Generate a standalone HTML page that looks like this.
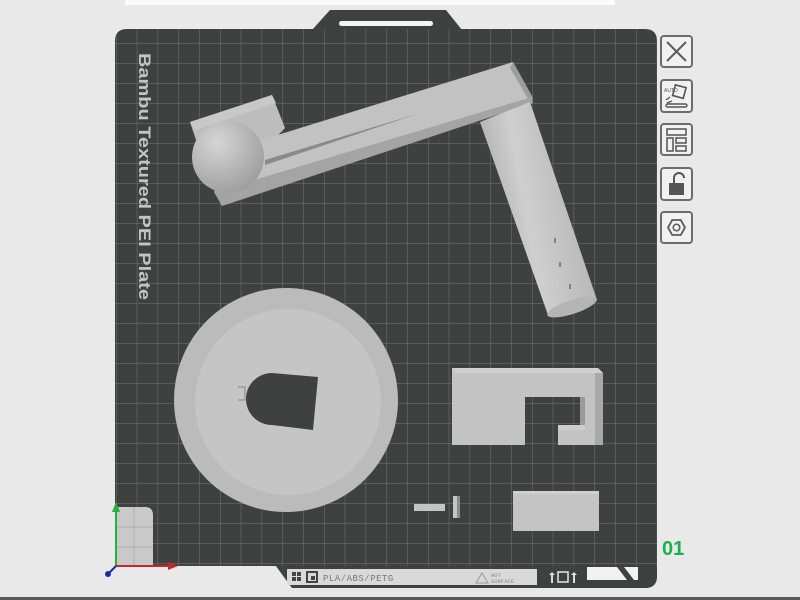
<!DOCTYPE html>
<html><head><meta charset="utf-8"><style>
html,body{margin:0;padding:0;background:#e9e9e9;width:800px;height:600px;overflow:hidden}
svg{display:block}
</style></head><body>
<svg width="800" height="600" viewBox="0 0 800 600" xmlns="http://www.w3.org/2000/svg">
<defs>
<pattern id="grid" x="116" y="3.3" width="20.8" height="20" patternUnits="userSpaceOnUse">
<rect width="20.8" height="20" fill="#3f4141"/>
<path d="M0 0V20M0 0H20.8" stroke="#747676" stroke-width="1"/>
</pattern>
<radialGradient id="sph" cx="0.35" cy="0.3" r="0.8"><stop offset="0" stop-color="#d6d6d6"/><stop offset="1" stop-color="#9a9a9a"/></radialGradient>
<linearGradient id="cyl" x1="0" y1="0" x2="1" y2="0" gradientTransform="rotate(-18 .5 .5)"><stop offset="0" stop-color="#a8a8a8"/><stop offset=".4" stop-color="#cfcfcf"/><stop offset="1" stop-color="#b0b0b0"/></linearGradient>
<clipPath id="pc"><path d="M127 29H645Q657 29 657 41V576Q657 588 645 588H292L276 566H115V41Q115 29 127 29Z"/></clipPath>
</defs>
<rect width="800" height="600" fill="#e9e9e9"/>
<rect x="125" y="0" width="490" height="5" fill="#fbfbfb"/>
<rect x="0" y="597" width="800" height="3" fill="#5a5a5a"/>
<path d="M312 30L330 10H446L462 30Z" fill="#3f4141"/>
<rect x="339" y="21" width="94" height="5" rx="2.5" fill="#f4f4f4"/>
<path d="M127 29H645Q657 29 657 41V576Q657 588 645 588H292L276 566H115V41Q115 29 127 29Z" fill="url(#grid)"/>
<g clip-path="url(#pc)">
<path d="M115 507H145Q153 507 153 515V566H115Z" fill="#c9c9c9"/>
<path d="M134 507V566M115 527H153M115 547H153" stroke="#b0b0b0" stroke-width="1"/>
<rect x="270" y="566" width="390" height="25" fill="#3f4141"/>
</g>
<rect x="287" y="569" width="250" height="16" fill="#d9d9d9"/>
<rect x="292" y="572" width="4" height="4" fill="#444"/><rect x="297" y="572" width="4" height="4" fill="#444"/><rect x="292" y="577" width="4" height="4" fill="#444"/><rect x="297" y="577" width="4" height="4" fill="#444"/>
<rect x="307" y="572" width="10" height="10" fill="none" stroke="#444" stroke-width="2"/><rect x="311" y="576" width="4" height="4" fill="#444"/>
<text x="323" y="581" font-family="Liberation Mono,monospace" font-size="9" fill="#777" letter-spacing="0.5">PLA/ABS/PETG</text>
<path d="M476 583L482 573L488 583Z" fill="none" stroke="#999" stroke-width="1"/>
<text x="491" y="577" font-family="Liberation Mono,monospace" font-size="5.5" fill="#888">HOT</text>
<text x="491" y="583" font-family="Liberation Mono,monospace" font-size="5.5" fill="#888">SURFACE</text>
<path d="M549 575l3-3 3 3h-2v8h-2v-8z" fill="#ddd"/>
<rect x="558" y="572" width="10" height="10" fill="none" stroke="#ddd" stroke-width="1.6"/>
<path d="M571 575l3-3 3 3h-2v8h-2v-8z" fill="#ddd"/>
<path d="M587 567H617L627 580H587Z" fill="#f2f2f2"/>
<path d="M624 567H638V580H634Z" fill="#f2f2f2"/>
<text transform="translate(139,53) rotate(90)" font-family="Liberation Sans,sans-serif" font-weight="bold" font-size="17" fill="#c4c4c4" textLength="247" lengthAdjust="spacingAndGlyphs">Bambu Textured PEI Plate</text>
<path d="M190 122L272 95L285 128L262 152L200 152Z" fill="#bdbdbd"/>
<path d="M190 122L272 95L276 103L195 130Z" fill="#c8c8c8"/>
<path d="M255 142L513 62L533 98L222 205L214 192Z" fill="#c2c2c2"/>
<path d="M513 62L533 98L531 104L510 68Z" fill="#9d9d9d"/>
<path d="M214 192L532 97L533 103L222 206Z" fill="#a4a4a4"/>
<path d="M265 160L420 113L265 165Z" fill="#8a8a8a"/>
<path d="M480 122L530 102L597 300L548 315Z" fill="url(#cyl)"/>
<ellipse cx="572" cy="307" rx="26" ry="7" transform="rotate(-18 572 307)" fill="#b5b5b5"/>
<path d="M555 238v5M560 262v5M570 284v5" stroke="#555" stroke-width="1.2"/>
<circle cx="228" cy="157" r="36" fill="url(#sph)"/>
<circle cx="286" cy="400" r="112" fill="#bbbbbb"/>
<circle cx="288" cy="402" r="93" fill="#c5c5c5"/>
<path d="M272 373L318 377L313 430L272 425A26 26 0 0 1 272 373Z" fill="#3f4141"/>
<path d="M238 387h7v13h-7" fill="none" stroke="#888" stroke-width="1"/>
<path d="M452 368H598L603 373V445H558V425H585V397H525V445H452Z" fill="#c3c3c3"/>
<path d="M595 371L603 373V445H595Z" fill="#a8a8a8"/>
<path d="M580 397H585V425H580Z" fill="#9a9a9a"/>
<path d="M558 425H585V430H558Z" fill="#cdcdcd"/>
<path d="M452 368H598L603 373H456Z" fill="#cfcfcf"/>
<rect x="513" y="491" width="86" height="40" fill="#c4c4c4"/>
<rect x="513" y="491" width="86" height="3" fill="#d0d0d0"/>
<rect x="414" y="504" width="31" height="7" fill="#c4c4c4"/>
<rect x="453" y="496" width="7" height="22" fill="#c4c4c4"/>
<rect x="457" y="496" width="3" height="22" fill="#8c8c8c"/>
<line x1="116" y1="566" x2="116" y2="510" stroke="#27b03b" stroke-width="2"/>
<path d="M112 512L116 502L120 512Z" fill="#27b03b"/>
<line x1="116" y1="566" x2="170" y2="566" stroke="#c8282d" stroke-width="2"/>
<path d="M168 562L178 566L168 570Z" fill="#c8282d"/>
<line x1="116" y1="566" x2="109" y2="573" stroke="#1c2aa0" stroke-width="2"/>
<circle cx="108" cy="574" r="3" fill="#1c2aa0"/>
<text x="662" y="555" font-family="Liberation Sans,sans-serif" font-weight="bold" font-size="20" fill="#20ad4f">01</text>
<g fill="#f1f1f1" stroke="#6c6c6c" stroke-width="2">
<rect x="661" y="36" width="31" height="31" rx="3"/>
<rect x="661" y="80" width="31" height="32" rx="3"/>
<rect x="661" y="124" width="31" height="31" rx="3"/>
<rect x="661" y="168" width="31" height="32" rx="3"/>
<rect x="661" y="212" width="31" height="31" rx="3"/>
</g>
<path d="M667 42L686 61M686 42L667 61" stroke="#5c5c5c" stroke-width="2"/>
<text x="664" y="92" font-family="Liberation Sans,sans-serif" font-size="5" fill="#555">AUTO</text>
<rect x="674" y="86" width="11" height="11" transform="rotate(15 679 91)" fill="none" stroke="#555" stroke-width="1.6"/>
<path d="M666 100l4-3M667 103l5-2" stroke="#555" stroke-width="1.4"/>
<rect x="666" y="104" width="21" height="3" rx="1.5" fill="none" stroke="#555" stroke-width="1.4"/>
<rect x="667" y="129" width="19" height="6" fill="none" stroke="#5c5c5c" stroke-width="1.6"/>
<rect x="667" y="138" width="6" height="13" fill="none" stroke="#5c5c5c" stroke-width="1.6"/>
<rect x="676" y="138" width="10" height="5" fill="none" stroke="#5c5c5c" stroke-width="1.6"/>
<rect x="676" y="146" width="10" height="5" fill="none" stroke="#5c5c5c" stroke-width="1.6"/>
<path d="M674 183v-5a5 5 0 0 1 10 0" fill="none" stroke="#555" stroke-width="2"/>
<rect x="669" y="183" width="15" height="12" fill="#555"/>
<path d="M668 227.5L672.2 220H680.8L685 227.5L680.8 235H672.2Z" fill="none" stroke="#5c5c5c" stroke-width="1.8"/>
<circle cx="676.5" cy="227.5" r="3.3" fill="none" stroke="#5c5c5c" stroke-width="1.5"/>
</svg>
</body></html>
